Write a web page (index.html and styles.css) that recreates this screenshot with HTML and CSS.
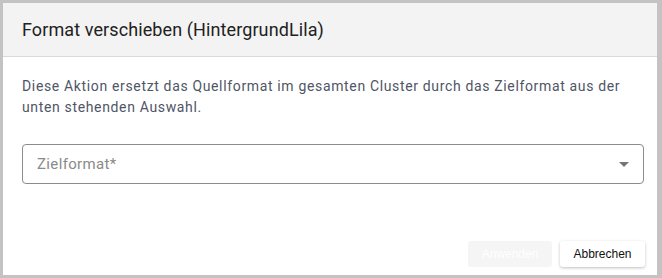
FILE: index.html
```html
<!DOCTYPE html>
<html lang="de">
<head>
<meta charset="utf-8">
<link rel="stylesheet" href="styles.css">
</head>
<body>
<div class="dialog">
  <div class="dialog-header">
    <h1 class="dialog-title">Format verschieben (HintergrundLila)</h1>
  </div>
  <div class="dialog-content">
    <p class="dialog-text">Diese Aktion ersetzt das Quellformat im gesamten Cluster durch das Zielformat aus der unten stehenden Auswahl.</p>
    <div class="select-field">
      <span class="select-placeholder">Zielformat*</span>
      <svg class="select-arrow" width="10" height="5" viewBox="0 0 10 5"><path d="M0 0 L10 0 L5 5 Z" fill="#757575"/></svg>
    </div>
  </div>
  <div class="dialog-actions">
    <button class="btn btn-disabled" disabled>Anwenden</button>
    <button class="btn btn-cancel">Abbrechen</button>
  </div>
</div>
</body>
</html>
```
FILE: styles.css
```css
html, body {
  margin: 0;
  padding: 0;
}
body {
  background: #c3c3c3;
  padding: 3px 5px 3px 3px;
  width: 662px;
  height: 278px;
  box-sizing: border-box;
  font-family: Roboto, "Liberation Sans", sans-serif;
}
.dialog {
  width: 654px;
  height: 272px;
  background: #fff;
  display: flex;
  flex-direction: column;
}
.dialog-header {
  height: 53px;
  background: #f3f3f3;
  border-bottom: 1px solid #d9d9d9;
  display: flex;
  align-items: center;
  padding-left: 19px;
}
.dialog-title {
  margin: 0;
  font-size: 18px;
  font-weight: 400;
  color: #212121;
  letter-spacing: 0.1px;
}
.dialog-content {
  flex: 1;
  padding: 19px 13px 0 19px;
}
.dialog-text {
  margin: 0;
  font-size: 14px;
  line-height: 21px;
  color: #4f5566;
  letter-spacing: 0.65px;
}
.select-field {
  margin-top: 26px;
  height: 38px;
  border: 1px solid #8c8c8c;
  border-radius: 4px;
  display: flex;
  align-items: center;
  justify-content: space-between;
  padding: 0 14px 0 14px;
}
.select-placeholder {
  font-size: 15px;
  color: #8a8a8a;
  letter-spacing: 0.35px;
}
.select-arrow {
  display: block;
}
.dialog-actions {
  display: flex;
  justify-content: flex-end;
  gap: 8px;
  padding: 0 12px 8px 0;
}
.btn {
  height: 26px;
  padding: 0 12px;
  font-family: "Liberation Sans", Arial, sans-serif;
  font-size: 12px;
  border-radius: 3px;
  border: none;
}
.btn-disabled {
  width: 84px;
  background: #f5f5f5;
  color: #ffffff;
}
.btn-cancel {
  width: 85px;
  background: #fff;
  color: #111;
  box-shadow: 0 1px 3px rgba(0,0,0,0.25);
}
```
